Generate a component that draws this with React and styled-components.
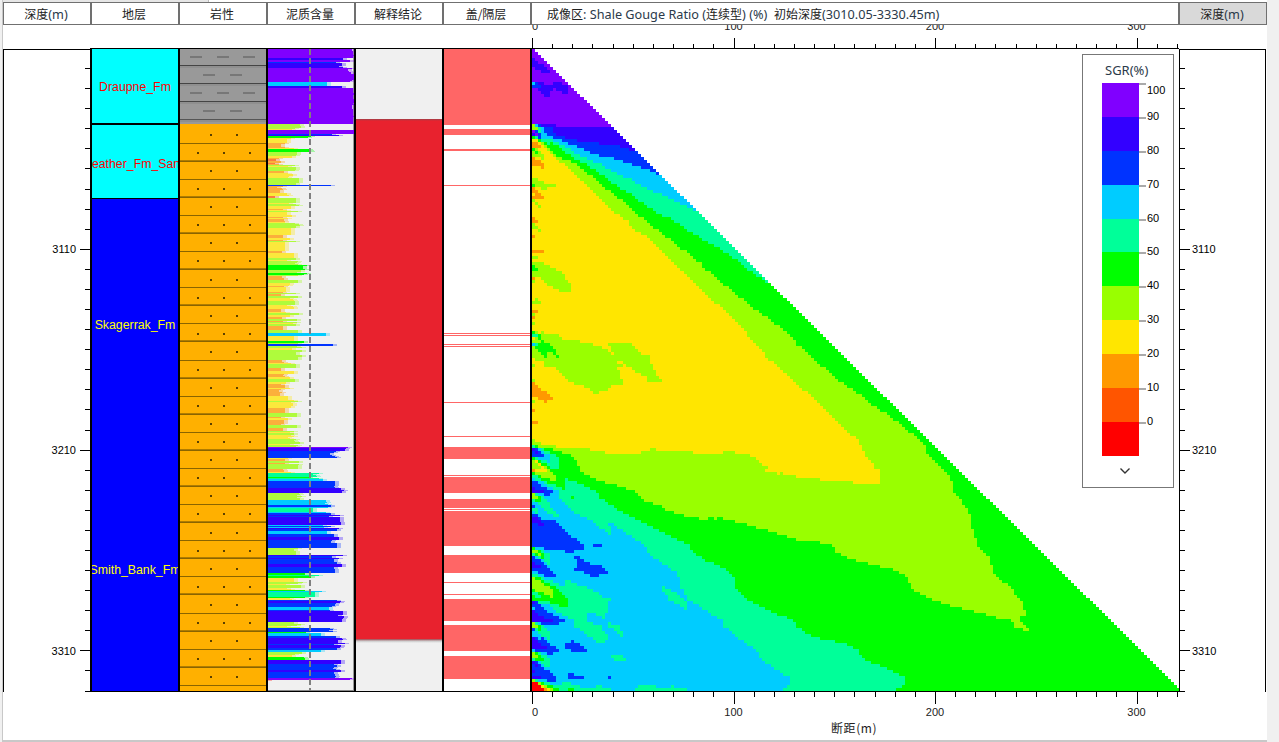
import React from "react";
import styled, { createGlobalStyle } from "styled-components";

const GlobalStyle = createGlobalStyle`
  html, body { margin: 0; padding: 0; background: #f0f0f0; overflow: hidden; }
  body { font-family: "Liberation Sans", Arial, sans-serif; }
`;

const PALETTE = ["#ff5500", "#ff9900", "#ffe600", "#99ff00", "#00ff00", "#00ff99", "#00ccff", "#0033ff", "#3300ff", "#8000ff"];
const RED = "#ff0000";

function colorFor(v) {
  if (v <= 0.5) return RED;
  return PALETTE[Math.min(9, Math.floor(v / 10))];
}

// clay profile, [from y, to y, low, high] read off the log track
const SEGMENTS = [
  [49, 58, 97, 100], [58, 60, 84, 90], [60, 62, 92, 98], [62, 68, 78, 90], [68, 72, 90, 100], [72, 82, 93, 100],
  [82, 86, 62, 74], [86, 88, 80, 86], [88, 124, 97, 100],
  [124, 130, 20, 40], [130, 134, 96, 100], [134, 136, 74, 84], [136, 138, 40, 50],
  [138, 149, 14, 30], [149, 152, 46, 50], [152, 158, 24, 34], [158, 165, 7, 16], [165, 178, 18, 36], [178, 185, 28, 40],
  [185, 186, 72, 74], [186, 196, 10, 26], [196, 198, 7, 9], [198, 262, 15, 37],
  [262, 276, 26, 46], [276, 333, 14, 36], [333, 336, 60, 68], [336, 344, 26, 46], [344, 346, 70, 78], [346, 360, 26, 40],
  [360, 400, 12, 33], [400, 402, 14, 40], [402, 440, 14, 34], [440, 447, 22, 40],
  [447, 451, 84, 92], [451, 456, 66, 78], [456, 458, 76, 80], [458, 473, 16, 36], [473, 479, 44, 62], [479, 481, 62, 68],
  [481, 493, 76, 90], [493, 500, 30, 44], [500, 508, 66, 78], [508, 512, 50, 62], [512, 540, 62, 84],
  [540, 548, 72, 82], [548, 555, 22, 42], [555, 573, 72, 88], [573, 578, 38, 60], [578, 590, 20, 40], [590, 598, 40, 64],
  [598, 600, 24, 30], [600, 606, 76, 86], [606, 611, 66, 76], [611, 622, 78, 88], [622, 628, 22, 38], [628, 632, 68, 76],
  [632, 636, 44, 62], [636, 650, 76, 88], [650, 652, 60, 68], [652, 658, 26, 42], [658, 660, 40, 46],
  [660, 678, 74, 86], [678, 680, 94, 98], [680, 692, 0, 0],
];

let seed = 1279;
function rand() {
  seed = (seed * 16807) % 2147483647;
  return seed / 2147483647;
}

const CLAY = {};
SEGMENTS.forEach(([a, b, lo, hi]) => {
  let last = lo + rand() * (hi - lo);
  for (let y = a; y < b; y++) {
    if (rand() > 0.45) last = lo + rand() * (hi - lo);
    CLAY[y] = last;
  }
});

const SUM = { 48: 0 };
for (let y = 49; y < 692; y++) SUM[y] = SUM[y - 1] + CLAY[y];

// shale gouge ratio: mean clay over the throw above each depth
function buildHeat() {
  const cellW = 3.03;
  const cellH = 3;
  const paths = {};
  for (let j = 0; j * cellH < 642; j++) {
    const y = 49 + j * cellH;
    const bottom = Math.min(691, y + cellH - 1);
    const maxD = ((y - 49 + 3) * 646) / 642;
    const cols = Math.ceil(maxD / cellW);
    let startI = 0;
    let cur = null;
    for (let i = 0; i <= cols; i++) {
      let c = null;
      if (i < cols) {
        const d = Math.max(3, Math.round(i * cellW + 1.5));
        const top = Math.max(48, bottom - d);
        const v = (SUM[bottom] - SUM[top]) / (bottom - top);
        c = colorFor(v);
      }
      if (c !== cur) {
        if (cur) {
          const x0 = Math.round(startI * cellW);
          const x1 = Math.round(i * cellW);
          paths[cur] = (paths[cur] || "") + `M${x0} ${j * cellH}h${x1 - x0}v${cellH}h${x0 - x1}z`;
        }
        cur = c;
        startI = i;
      }
    }
  }
  return paths;
}

const HEAT = buildHeat();

const range = (n) => Array.from({ length: n }, (_, i) => i);

const LEGEND = [
  { label: "100", color: "#8000ff", shift: 8 },
  { label: "90", color: "#3300ff" },
  { label: "80", color: "#0033ff" },
  { label: "70", color: "#00ccff" },
  { label: "60", color: "#00ff99" },
  { label: "50", color: "#00ff00" },
  { label: "40", color: "#99ff00" },
  { label: "30", color: "#ffe600" },
  { label: "20", color: "#ff9900" },
  { label: "10", color: "#ff5500" },
  { label: "0", color: "#ff0000" },
];

const CAP_BANDS = [
  [49, 125, 1], [125, 129, 0], [129, 135, 1], [135, 149, 0], [149, 151, 1], [151, 185, 0], [185, 186, 1], [186, 333, 0],
  [333, 334, 1], [334, 335, 0], [335, 336, 1], [336, 344, 0], [344, 345, 1], [345, 346, 0], [346, 347, 1], [347, 402, 0],
  [402, 403, 1], [403, 436, 0], [436, 437, 1], [437, 447, 0], [447, 459, 1], [459, 475, 0], [475, 476, 1], [476, 477, 0],
  [477, 493, 1], [493, 499, 0], [499, 508, 1], [508, 509, 0], [509, 510, 1], [510, 511, 0], [511, 546, 1], [546, 555, 0],
  [555, 573, 1], [573, 582, 0], [582, 583, 1], [583, 594, 0], [594, 595, 1], [595, 599, 0], [599, 621, 1], [621, 625, 0],
  [625, 651, 1], [651, 656, 0], [656, 679, 1], [679, 691, 0],
];

const Screen = styled.div`
  width: 1279px;
  height: 742px;
  background: #f0f0f0;
  overflow: hidden;
`;

const Panel = styled.div`
  width: 1264px;
  height: 740px;
  margin-left: 2px;
  background: #ffffff;
  border-left: 1px solid #c8c8c8;
  border-bottom: 2px solid #c8c8c8;
  display: flex;
  flex-direction: column;
`;

const TabStrip = styled.div`
  height: 2px;
  flex: none;
  width: 205px;
  background: #e6e6e6;
  border-right: 1px solid #bbbbbb;
`;

const HeaderRow = styled.div`
  display: flex;
  flex: none;
  height: 23px;
  position: relative;
  z-index: 2;
`;

const HeaderCell = styled.div`
  box-sizing: border-box;
  width: ${(p) => p.$w || 88}px;
  border: 1px solid #707070;
  background: ${(p) => (p.$shaded ? "#d9d9d9" : "#ffffff")};
  display: flex;
  align-items: center;
  justify-content: ${(p) => (p.$left ? "flex-start" : "center")};
  padding: ${(p) => (p.$left ? "0 0 0 15px" : "0 2px 0 0")};
  font: 12px "Noto Sans CJK SC", "Noto Sans", sans-serif;
  color: #222222;
  white-space: pre;
`;

const Latin = styled.span`
  font: 12.7px "Noto Sans", sans-serif;
  color: #2b3a4a;
`;

const AxisRow = styled.div`
  flex: none;
  height: 23px;
  padding-left: 527px;
`;

const TrackRow = styled.div`
  flex: none;
  height: 644px;
  display: flex;
  position: relative;
`;

const DepthTrack = styled.div`
  box-sizing: border-box;
  width: 87px;
  margin-top: 1px;
  border-top: 1px solid #000000;
  border-left: 1px solid #000000;
`;

const Track = styled.div`
  box-sizing: border-box;
  width: 88px;
  flex: none;
  border-left: 2px solid #000000;
  border-top: 1px solid #000000;
  border-bottom: 1px solid #000000;
  display: flex;
  flex-direction: column;
  overflow: hidden;
  background: ${(p) => p.$bg || "#ffffff"};
`;

const Formation = styled.div`
  box-sizing: border-box;
  flex: none;
  height: ${(p) => p.$h}px;
  padding-top: ${(p) => p.$pt || 0}px;
  background: ${(p) => p.$bg};
  color: ${(p) => p.$color};
  border-bottom: ${(p) => p.$line || 0}px solid #000000;
  display: flex;
  align-items: center;
  justify-content: center;
  overflow: hidden;
  white-space: nowrap;
  font-size: 12.3px;
`;

const Band = styled.div`
  flex: none;
  height: ${(p) => p.$h}px;
  background: ${(p) => p.$bg};
`;

const ChartTrack = styled(Track)`
  width: 649px;
  position: relative;
  overflow: visible;
`;

const RightDepth = styled.div`
  box-sizing: border-box;
  width: 88px;
  margin-top: 1px;
  margin-left: -1px;
  border-top: 1px solid #000000;
  border-left: 2px solid #000000;
  border-right: 1px solid #000000;
`;

const BottomArea = styled.div`
  flex: 1;
  position: relative;
  padding-left: 527px;
`;

const AxisTitle = styled.div`
  position: absolute;
  left: 828px;
  top: 27px;
  font: 12px "Noto Sans CJK SC", sans-serif;
  letter-spacing: 0.6px;
  color: #222222;
`;

const Legend = styled.div`
  position: absolute;
  right: 5px;
  top: 5px;
  box-sizing: border-box;
  width: 92px;
  height: 434px;
  background: #ffffff;
  border: 1px solid #777777;
  display: flex;
  flex-direction: column;
  padding-left: 19px;
`;

const LegendTitle = styled.div`
  font: 13px "Noto Sans", sans-serif;
  line-height: 14px;
  color: #2b3a4a;
  padding: 8px 0 6px 3px;
  height: 14px;
`;

const LegendRow = styled.div`
  display: flex;
  height: 33.9px;
  flex: none;
`;

const Swatch = styled.div`
  width: 37px;
  background: ${(p) => p.$color};
`;

const Tick = styled.div`
  width: 7px;
  height: 2px;
  background: #aaaaaa;
`;

const TickLabel = styled.div`
  font-size: 11px;
  line-height: 12px;
  color: #000000;
  margin-left: 1px;
  transform: translateY(${(p) => (p.$shift || 0) - 7}px);
`;

const Chevron = styled.svg`
  display: block;
  margin: 11px 0 0 17px;
`;

function VerticalTicks({ side }) {
  const right = side === "right";
  return (
    <svg width={right ? 85 : 86} height={643} style={{ display: "block" }} shapeRendering="crispEdges">
      {range(32).map((i) => {
        const y = Math.round(20.08 * (i + 1)) - 2;
        const major = i % 10 === 9;
        const len = major ? 10 : 5;
        return right ? (
          <line key={i} x1={0} x2={len} y1={y} y2={y} stroke="#000" />
        ) : (
          <line key={i} x1={86 - len} x2={86} y1={y} y2={y} stroke="#000" />
        );
      })}
      {["3110", "3210", "3310"].map((t, i) => (
        <text key={t} x={right ? 12 : 72} y={202.5 + i * 201} textAnchor={right ? "start" : "end"} fontSize="11" fontFamily="Liberation Sans" fill="#000" shapeRendering="auto">
          {t}
        </text>
      ))}
    </svg>
  );
}

function XAxis({ top }) {
  const base = top ? 23 : 0;
  const dir = top ? -1 : 1;
  return (
    <svg width={652} height={top ? 23 : 28} style={{ display: "block", overflow: "visible" }} shapeRendering="crispEdges">
      {range(33).map((i) => {
        const x = Math.round(2 + i * 20.15);
        const major = i % 10 === 0;
        const len = major ? (top ? 10 : 12) : top ? 4 : 5;
        return <line key={i} x1={x} x2={x} y1={base} y2={base + dir * len} stroke="#000" />;
      })}
      {["0", "100", "200", "300"].map((t, i) => (
        <text key={t} x={i === 0 ? 2 : 2 + i * 201.5} y={top ? 5 : 24} textAnchor={i === 0 ? "start" : "middle"} fontSize="11" fontFamily="Liberation Sans" fill="#222" shapeRendering="auto">
          {t}
        </text>
      ))}
    </svg>
  );
}

function Lithology() {
  const grayRows = range(4);
  const sandRows = range(32);
  return (
    <svg width={86} height={642} style={{ display: "block" }} shapeRendering="crispEdges">
      <rect width={86} height={75} fill="#999999" />
      <rect y={75} width={86} height={567} fill="#ffb000" />
      {grayRows.map((r) => (
        <g key={r}>
          <rect y={16 + r * 18} width={86} height={1} fill="#444444" />
          <rect y={17 + r * 18} width={86} height={2} fill="#8f8f8f" />
          {(r % 2 ? [23, 50] : [10, 37, 63]).map((x) => (
            <rect key={x} x={x} y={7 + r * 18} width={12} height={2} fill="#777777" />
          ))}
        </g>
      ))}
      <rect y={70} width={86} height={1} fill="#555555" />
      {sandRows.map((r) => {
        const y = 93.7 + r * 18.07;
        const mid = 85 + r * 18.07;
        return (
          <g key={r}>
            <rect y={Math.round(y)} width={86} height={1} fill="#8a6400" />
            <rect y={Math.round(y) - 1} width={86} height={1} fill="#b07c00" opacity={r % 2 ? 1 : 0} />
            {(r % 2 ? [17, 43, 69] : [30, 56]).map((x) => (
              <rect key={x} x={x} y={Math.round(mid)} width={2} height={2} fill="#5a4000" />
            ))}
          </g>
        );
      })}
    </svg>
  );
}

function ClayLog() {
  const rows = range(632).map((i) => i + 49);
  return (
    <svg width={86} height={642} style={{ display: "block" }} shapeRendering="crispEdges">
      <rect width={86} height={642} fill="#f0f0f0" />
      <rect x={85} width={1} height={642} fill="#999999" />
      <rect y={641} width={86} height={1} fill="#888888" />
      {rows.map((y) => {
        const v = CLAY[y];
        const w = (v / 100) * 87;
        const c = colorFor(v);
        return (
          <g key={y}>
            <rect y={y - 49} width={w} height={1} fill={c} opacity={v < 40 ? 0.75 : 1} />
            <rect x={w} y={y - 49} width={4} height={1} fill={c} opacity={0.3} />
          </g>
        );
      })}
      <line x1={42} x2={42} y1={0} y2={642} stroke="#808080" strokeWidth={2} strokeDasharray="6 3" />
    </svg>
  );
}

function HeatMap() {
  return (
    <svg width={647} height={642} style={{ display: "block" }} shapeRendering="crispEdges">
      {Object.entries(HEAT).map(([color, d]) => (
        <path key={color} d={d} fill={color} />
      ))}
    </svg>
  );
}

export default function App() {
  return (
    <Screen>
      <GlobalStyle />
      <Panel>
        <TabStrip />
        <HeaderRow>
          <HeaderCell>深度<Latin>(m)</Latin></HeaderCell>
          <HeaderCell>地层</HeaderCell>
          <HeaderCell>岩性</HeaderCell>
          <HeaderCell>泥质含量</HeaderCell>
          <HeaderCell>解释结论</HeaderCell>
          <HeaderCell>盖/隔层</HeaderCell>
          <HeaderCell $w={648} $left>
            成像区<Latin>: Shale Gouge Ratio (</Latin>连续型<Latin>) (%)  </Latin>初始深度<Latin>(3010.05-3330.45m)</Latin>
          </HeaderCell>
          <HeaderCell $shaded>深度<Latin>(m)</Latin></HeaderCell>
        </HeaderRow>
        <AxisRow>
          <XAxis top />
        </AxisRow>
        <TrackRow>
          <DepthTrack>
            <VerticalTicks side="left" />
          </DepthTrack>
          <Track>
            <Formation $h={76} $pt={2} $bg="#00ffff" $color="#ff0000" $line={2}>Draupne_Fm</Formation>
            <Formation $h={74} $pt={5} $bg="#00ffff" $color="#ff0000" $line={1}>Heather_Fm_Sand</Formation>
            <Formation $h={246} $pt={5} $bg="#0000ff" $color="#ffff00">Skagerrak_Fm</Formation>
            <Formation $h={246} $pt={4} $bg="#0000ff" $color="#ffff00">Smith_Bank_Fm</Formation>
          </Track>
          <Track>
            <Lithology />
          </Track>
          <Track>
            <ClayLog />
          </Track>
          <Track $bg="#f0f0f0">
            <Band $h={70} $bg="#f0f0f0" />
            <Band $h={2} $bg="linear-gradient(#a04048, #e8222e)" />
            <Band $h={518} $bg="#e8222e" />
            <Band $h={4} $bg="linear-gradient(#a04048, #c9c9c9, #f0f0f0)" />
          </Track>
          <Track>
            {CAP_BANDS.map(([a, b, on]) => (
              <Band key={a} $h={b - a} $bg={on ? "#ff6666" : "#ffffff"} />
            ))}
          </Track>
          <ChartTrack>
            <HeatMap />
            <Legend>
              <LegendTitle>SGR(%)</LegendTitle>
              {LEGEND.map((item) => (
                <LegendRow key={item.label}>
                  <Swatch $color={item.color} />
                  <Tick />
                  <TickLabel $shift={item.shift}>{item.label}</TickLabel>
                </LegendRow>
              ))}
              <Chevron width="12" height="8" viewBox="0 0 12 8">
                <path d="M1.5 1.5 L6 6 L10.5 1.5" fill="none" stroke="#333" strokeWidth="1.4" />
              </Chevron>
            </Legend>
          </ChartTrack>
          <RightDepth>
            <VerticalTicks side="right" />
          </RightDepth>
        </TrackRow>
        <BottomArea>
          <XAxis />
          <AxisTitle>断距(m)</AxisTitle>
        </BottomArea>
      </Panel>
    </Screen>
  );
}
